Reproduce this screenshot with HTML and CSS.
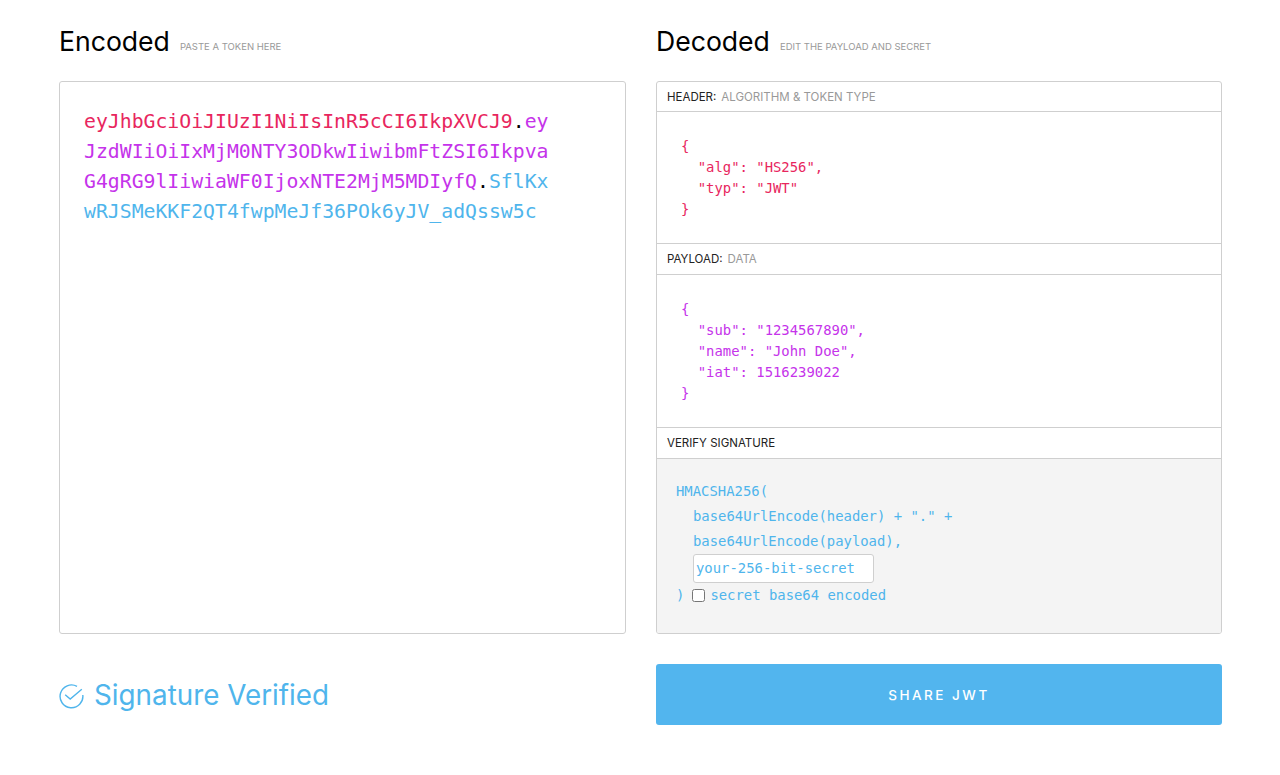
FILE: index.html
```html
<!DOCTYPE html>
<html lang="en">
<head>
<meta charset="utf-8">
<title>JWT Debugger</title>
<link rel="stylesheet" href="styles.css">
</head>
<body>
<main class="page">
  <section class="col">
    <header class="col-head"><h2>Encoded</h2><small>PASTE A TOKEN HERE</small></header>
    <div class="panel token">
      <span class="red">eyJhbGciOiJIUzI1NiIsInR5cCI6IkpXVCJ9</span>.<span class="purple">ey<br>JzdWIiOiIxMjM0NTY3ODkwIiwibmFtZSI6Ikpva<br>G4gRG9lIiwiaWF0IjoxNTE2MjM5MDIyfQ</span>.<span class="blue">SflKx<br>wRJSMeKKF2QT4fwpMeJf36POk6yJV_adQssw5c</span>
    </div>
    <div class="foot">
      <div class="verified">
        <svg class="check" width="25" height="25" viewBox="0 0 25 25" fill="none" stroke="#4fb5ec" stroke-width="1.4"><path d="M18 2.4A11.4 11.4 0 1 0 23.8 11"/><path d="M6.2 10.8 11.2 15 22.8 5.2"/></svg>
        <span>Signature Verified</span>
      </div>
    </div>
  </section>
  <section class="col">
    <header class="col-head"><h2>Decoded</h2><small>EDIT THE PAYLOAD AND SECRET</small></header>
    <div class="panel decoded">
      <div class="row-head first">HEADER:<em>ALGORITHM &amp; TOKEN TYPE</em></div>
      <pre class="json header-json red">{
  "alg": "HS256",
  "typ": "JWT"
}</pre>
      <div class="row-head">PAYLOAD:<em>DATA</em></div>
      <pre class="json payload-json purple">{
  "sub": "1234567890",
  "name": "John Doe",
  "iat": 1516239022
}</pre>
      <div class="row-head">VERIFY SIGNATURE</div>
      <div class="sig blue">
        <div class="sig-line">HMACSHA256(</div>
        <div class="sig-line indent">base64UrlEncode(header) + "." +</div>
        <div class="sig-line indent">base64UrlEncode(payload),</div>
        <div class="indent"><input class="secret" type="text" value="your-256-bit-secret"></div>
        <div class="sig-end">)<label class="b64"><input type="checkbox">secret base64 encoded</label></div>
      </div>
    </div>
    <div class="foot"><button class="share">SHARE JWT</button></div>
  </section>
</main>
</body>
</html>
```
FILE: styles.css
```css
* { box-sizing: border-box; }
html, body { margin: 0; padding: 0; background: #fff; }
body { font-family: Inter, "Noto Sans", sans-serif; color: #000; height: 775px; overflow: hidden; }
.page { display: grid; grid-template-columns: 567px 566px; column-gap: 30px; padding: 0 0 0 59px; }
.col { display: flex; flex-direction: column; }
.col-head { height: 81px; display: flex; align-items: flex-start; padding-top: 24px; }
.col-head h2 { margin: 0; font-size: 26.6px; line-height: 34px; font-weight: 400; }
.col-head small { margin: 16px 0 0 10px; font-size: 9.5px; line-height: 14px; color: #999; }
.panel { height: 553px; border: 1px solid #cfcfcf; border-radius: 3px; background: #fff; }
.token { padding: 25px 24px; font: 19.8px/30px "DejaVu Sans Mono", monospace; }
.red { color: #e8265e; }
.purple { color: #c533ea; }
.blue { color: #4fb5ec; }
.foot { height: 91px; padding-top: 30px; }
.verified { display: flex; align-items: center; gap: 10px; height: 61px; color: #4fb5ec; font-size: 27.8px; }
.check { flex: none; margin-top: 3px; }
.share { display: block; width: 100%; height: 61px; border: 0; border-radius: 3px; background: #52b5ee; color: #fff; font: 500 13.5px Inter, sans-serif; letter-spacing: 2.5px; }
.decoded { display: flex; flex-direction: column; overflow: hidden; }
.row-head { height: 32px; flex: none; padding: 0 10px; display: flex; align-items: center; font-size: 11.5px; border-top: 1px solid #cfcfcf; border-bottom: 1px solid #cfcfcf; color: #222; }
.row-head.first { height: 30px; border-top: 0; }
.row-head em { font-style: normal; color: #999; margin-left: 5px; }
.json { margin: 0; flex: none; padding: 24px 24px; font: 13.9px/21px "DejaVu Sans Mono", monospace; }
.header-json { height: 131px; }
.payload-json { height: 152px; }
.sig { flex: 1; background: #f4f4f4; padding: 20px 19px; font: 13.9px/25px "DejaVu Sans Mono", monospace; }
.indent { padding-left: 17px; }
.secret { display: block; width: 181px; height: 29px; padding: 0 2px 2px; border: 1px solid #cfcfcf; border-radius: 3px; background: #fff; color: #4fb5ec; font: 13.9px "DejaVu Sans Mono", monospace; outline: 0; }
.sig-end { display: flex; align-items: center; height: 25px; }
.b64 { display: flex; align-items: center; margin-left: 8px; }
.b64 input { width: 13px; height: 13px; margin: 0 5px 0 0; }
```
